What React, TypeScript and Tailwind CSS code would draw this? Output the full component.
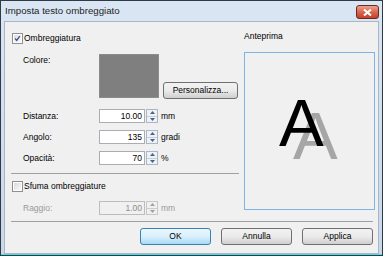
function Check({ checked }: { checked?: boolean }) {
  return (
    <div className="w-[11px] h-[11px] border border-[#8e8f8f] bg-white p-[1px] shrink-0">
      <div className="w-full h-full bg-gradient-to-br from-[#dcdcdc] to-[#f8f8f8] flex items-center justify-center">
        {checked && (
          <svg width="9" height="9" viewBox="0 0 9 9">
            <path d="M1.5 4.5 L3.5 7 L7.5 1.5" fill="none" stroke="#3b4d8c" strokeWidth="1.6" />
          </svg>
        )}
      </div>
    </div>
  )
}

function Spin({ value, unit, disabled }: { value: string; unit: string; disabled?: boolean }) {
  return (
    <div className="flex items-center h-[14px]">
      <div
        className={`w-[46px] h-[14px] border flex items-center justify-end pr-[2px] ${
          disabled ? 'border-[#bdbdbd] bg-[#f0f0f0] text-[#8d8d8d]' : 'border-[#abadb3] bg-white text-black'
        }`}
      >
        {value}
      </div>
      <div
        className={`w-[12px] h-[14px] ml-[1px] border flex flex-col ${
          disabled ? 'border-[#c8c8c8] bg-[#f0f0f0]' : 'border-[#acb7c5] bg-[#eef2f6]'
        }`}
      >
        <div className="flex-1 flex items-center justify-center border-b border-[#c6ced8]">
          <svg width="5" height="3" viewBox="0 0 5 3">
            <path d="M0 3 L2.5 0 L5 3 Z" fill={disabled ? '#a0a0a0' : '#4d6185'} />
          </svg>
        </div>
        <div className="flex-1 flex items-center justify-center">
          <svg width="5" height="3" viewBox="0 0 5 3">
            <path d="M0 0 L2.5 3 L5 0 Z" fill={disabled ? '#a0a0a0' : '#4d6185'} />
          </svg>
        </div>
      </div>
      <span className={`ml-[3px] ${disabled ? 'text-[#9a9a9a]' : 'text-black'}`}>{unit}</span>
    </div>
  )
}

function Btn({ label, primary, w }: { label: string; primary?: boolean; w: string }) {
  return (
    <div
      className={`${w} h-[17px] rounded-[3px] border flex items-center justify-center ${
        primary
          ? 'border-[#3c7fb1] bg-gradient-to-b from-[#eaf6fd] via-[#d9f0fc] to-[#a7d9f5]'
          : 'border-[#707070] bg-gradient-to-b from-[#f2f2f2] via-[#ebebeb] to-[#cfcfcf]'
      }`}
    >
      {label}
    </div>
  )
}

export default function App() {
  return (
    <div
      className="w-[383px] h-[256px] flex flex-col border border-[#2e3a46] bg-gradient-to-b from-[#dbe6f4] to-[#c8d7ea] text-[8.5px] leading-none text-black"
      style={{ fontFamily: '"Liberation Sans", Arial, sans-serif' }}
    >
      {/* title bar */}
      <div className="h-[20px] flex items-center justify-between pl-[4px] pr-[3px]">
        <span className="text-[9.7px] text-[#1e1e1e]">Imposta testo ombreggiato</span>
        <div className="w-[23px] h-[14px] mt-[2px] rounded-[3px] border border-[#6b2a22] bg-gradient-to-b from-[#eba28f] via-[#d8674f] to-[#c2402a] flex items-center justify-center">
          <svg width="9" height="7" viewBox="0 0 9 7">
            <path d="M1 0.5 L8 6.5 M8 0.5 L1 6.5" stroke="white" strokeWidth="2" />
          </svg>
        </div>
      </div>

      {/* client */}
      <div className="flex-1 mx-[3px] border border-[#a8b6c6] bg-[#f0f0f0] flex flex-col">
        <div className="flex pl-[7px] pt-[11px]">
          {/* left column */}
          <div className="w-[227px] flex flex-col">
            <div className="flex items-center gap-[1px] h-[11px]">
              <Check checked />
              <span>Ombreggiatura</span>
            </div>

            <div className="flex mt-[10px] pl-[11px]">
              <span className="w-[76px] pt-[2px]">Colore:</span>
              <div className="w-[60px] h-[44px] bg-[#7f7f7f] border border-[#8c8c8c]" />
              <div className="self-end ml-[4px] -mb-[1px]">
                <Btn label="Personalizza..." w="w-[75px]" />
              </div>
            </div>

            <div className="flex flex-col gap-[7px] mt-[11px] pl-[11px]">
              <div className="flex items-center">
                <span className="w-[76px]">Distanza:</span>
                <Spin value="10.00" unit="mm" />
              </div>
              <div className="flex items-center">
                <span className="w-[76px]">Angolo:</span>
                <Spin value="135" unit="gradi" />
              </div>
              <div className="flex items-center">
                <span className="w-[76px]">Opacità:</span>
                <Spin value="70" unit="%" />
              </div>
            </div>

            <div className="h-[1px] bg-[#a0a0a0] mt-[8px] -ml-[1px]" />

            <div className="flex items-center gap-[1px] h-[11px] mt-[7px]">
              <Check />
              <span>Sfuma ombreggiature</span>
            </div>

            <div className="flex items-center mt-[9px] pl-[11px]">
              <span className="w-[76px] text-[#9a9a9a]">Raggio:</span>
              <Spin value="1.00" unit="mm" disabled />
            </div>
          </div>

          {/* right column */}
          <div className="flex flex-col ml-[5px] -mt-[1px]">
            <span>Anteprima</span>
            <div className="relative w-[131px] h-[158px] mt-[11px] border border-[#7fb2e5] bg-[#f0f0f0] overflow-hidden">
              <span className="absolute left-[48px] top-[49px] text-[67px] leading-none text-[#a6a6a6]">A</span>
              <span className="absolute left-[34px] top-[36px] text-[67px] leading-none text-black">A</span>
            </div>
          </div>
        </div>

        <div className="h-[1px] bg-[#a0a0a0] mt-[6px] ml-[6px] mr-[5px]" />

        <div className="flex justify-end gap-[10px] mr-[5px] mt-[6px]">
          <Btn label="OK" primary w="w-[71px]" />
          <Btn label="Annulla" w="w-[71px]" />
          <Btn label="Applica" w="w-[71px]" />
        </div>
      </div>
      <div className="h-[1px] bg-[#45dfe6]" />
    </div>
  )
}
